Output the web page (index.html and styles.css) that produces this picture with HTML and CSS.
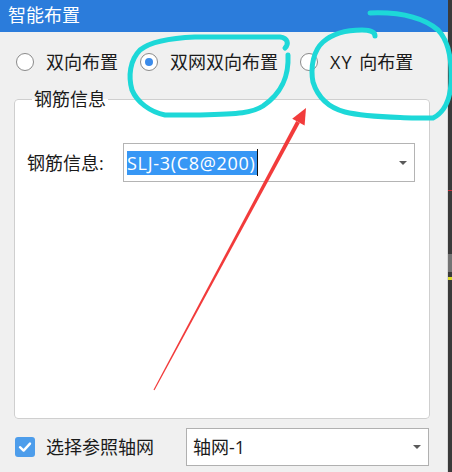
FILE: index.html
```html
<!DOCTYPE html>
<html lang="zh-CN">
<head>
<meta charset="utf-8">
<title>智能布置</title>
<link rel="stylesheet" href="styles.css">
</head>
<body>
<div class="screen">
  <div class="window">
    <div class="titlebar">智能布置</div>
    <div class="content">
      <div class="radios">
        <label class="radio"><span class="circle"></span><span class="rtext">双向布置</span></label>
        <label class="radio"><span class="circle checked"></span><span class="rtext">双网双向布置</span></label>
        <label class="radio"><span class="circle"></span><span class="rtext"><span class="latin">XY</span> 向布置</span></label>
      </div>
      <fieldset class="group">
        <legend class="legend">钢筋信息</legend>
        <div class="row">
          <span class="label">钢筋信息:</span>
          <div class="combo combo-main">
            <span class="value"><span class="selected">SLJ-3(C8@200)</span><span class="caret"></span></span>
            <span class="arrow"></span>
          </div>
        </div>
      </fieldset>
      <div class="bottom">
        <span class="checkbox">
          <svg width="20" height="20" viewBox="0 0 20 20"><path d="M5 10.2 L8.6 13.6 L15 6.6" fill="none" stroke="#fff" stroke-width="2.4" stroke-linecap="round" stroke-linejoin="round"/></svg>
        </span>
        <span class="cbtext">选择参照轴网</span>
        <div class="combo combo-axis">
          <span class="value">轴网-1</span>
          <span class="arrow"></span>
        </div>
      </div>
    </div>
  </div>
  <div class="strip">
    <span class="mark-red"></span>
    <span class="mark-gray"></span>
    <span class="mark-yellow"></span>
  </div>
</div>
<svg class="annot" width="452" height="472" viewBox="0 0 452 472">
  <path d="M288,55 C289,75 283,92 263,106 C252,113 240,114 200,115 L165,115 C150,112 137,102 132,90 C128,76 130,60 140,50 C150,42 170,38 195,37 L280,37 C288,38 289,44 285,48" fill="none" stroke="#1dd8d8" stroke-width="5" stroke-linecap="round" stroke-linejoin="round"/>
  <path d="M370,13 C395,12 420,15 438,30 C448,40 452,60 451,83 C450,100 445,112 433,118 L412,118 C390,117 365,117 345,112 C330,108 318,98 313,82 C310,66 314,50 323,42 C332,34 345,30 362,30 C370,30 375,32 375,36" fill="none" stroke="#1dd8d8" stroke-width="5" stroke-linecap="round" stroke-linejoin="round"/>
  <polygon points="153.5,389.7 296.2,121.05 299.8,122.95 154.5,390.3" fill="#f23b3b"/>
  <polygon points="306,108 292.2,118.8 304.6,125.4" fill="#f23b3b"/>
</svg>
</body>
</html>
```

FILE: styles.css
```css
html, body {
  margin: 0;
  padding: 0;
}
body {
  width: 452px;
  height: 472px;
  overflow: hidden;
  position: relative;
  font-family: "Open Sans", "Noto Sans CJK SC", sans-serif;
  color: #1a1a1a;
  background: #f0f0f0;
}
.screen {
  display: flex;
  width: 452px;
  height: 472px;
}
.window {
  width: 448px;
  display: flex;
  flex-direction: column;
  background: #f0f0f0;
}
.titlebar {
  height: 32px;
  line-height: 30px;
  background: #2b7cdb;
  color: #fff;
  font-size: 18px;
  padding-left: 8px;
  box-sizing: border-box;
}
.content {
  flex: 1;
  display: flex;
  flex-direction: column;
  border-right: 1px solid #d9d9d9;
  padding: 15px 17px 6px 14px;
}
.radios {
  display: flex;
  align-items: center;
  height: 30px;
  gap: 22px;
  padding-left: 2px;
}
.radio {
  display: flex;
  align-items: center;
  font-size: 18px;
  line-height: 24px;
}
.latin {
  letter-spacing: 1px;
  margin-right: 2px;
}
.circle {
  width: 16px;
  height: 16px;
  border: 1px solid #8a8a8a;
  border-radius: 50%;
  background: #fff;
  margin-right: 12px;
  display: flex;
  align-items: center;
  justify-content: center;
}
.circle.checked::after {
  content: "";
  width: 8px;
  height: 8px;
  border-radius: 50%;
  background: #3b8bea;
}
.group {
  margin: 10px 0 0 0;
  padding: 0 13px 0 12px;
  height: 332px;
  box-sizing: border-box;
  border: 1px solid #cfcfcf;
  border-radius: 4px;
  background: #fff;
  min-width: 0;
}
.legend {
  font-size: 18px;
  line-height: 24px;
  padding: 0 2px;
  margin-left: 5px;
}
.row {
  display: flex;
  align-items: center;
  margin-top: 32px;
}
.label {
  width: 96px;
  font-size: 18px;
  line-height: 24px;
}
.combo {
  display: flex;
  align-items: center;
  justify-content: space-between;
  background: #fff;
  border: 1px solid #b4b4b4;
  box-sizing: border-box;
  font-size: 18px;
  line-height: 24px;
}
.combo-main {
  width: 292px;
  height: 39px;
  padding: 0 7px 0 3px;
}
.value {
  display: flex;
  align-items: center;
}
.selected {
  background: #3797f5;
  color: #fff;
  letter-spacing: 0.7px;
  padding-right: 1px;
}
.caret {
  width: 1px;
  height: 27px;
  background: #111;
}
.arrow {
  width: 0;
  height: 0;
  border-left: 4px solid transparent;
  border-right: 4px solid transparent;
  border-top: 4px solid #5a5a5a;
}
.bottom {
  margin-top: 9px;
  display: flex;
  align-items: center;
  height: 38px;
  padding-left: 1px;
}
.checkbox {
  width: 20px;
  height: 20px;
  border-radius: 3px;
  background: #4d9deb;
  display: flex;
  margin-right: 11px;
}
.cbtext {
  font-size: 18px;
  line-height: 24px;
  width: 140px;
}
.combo-axis {
  width: 243px;
  height: 38px;
  padding: 0 7px 0 6px;
  border-color: #b0b0b0;
}
.strip {
  width: 4px;
  background: #3a3a3a;
  display: flex;
  flex-direction: column;
}
.mark-red {
  margin-top: 190px;
  height: 1px;
  background: #c8303a;
}
.mark-gray {
  margin-top: 63px;
  height: 18px;
  background: #9a9a9a;
  opacity: 0.6;
}
.mark-yellow {
  margin-top: 5px;
  height: 3px;
  background: #d9d92a;
}
.annot {
  position: absolute;
  left: 0;
  top: 0;
  pointer-events: none;
}
```
